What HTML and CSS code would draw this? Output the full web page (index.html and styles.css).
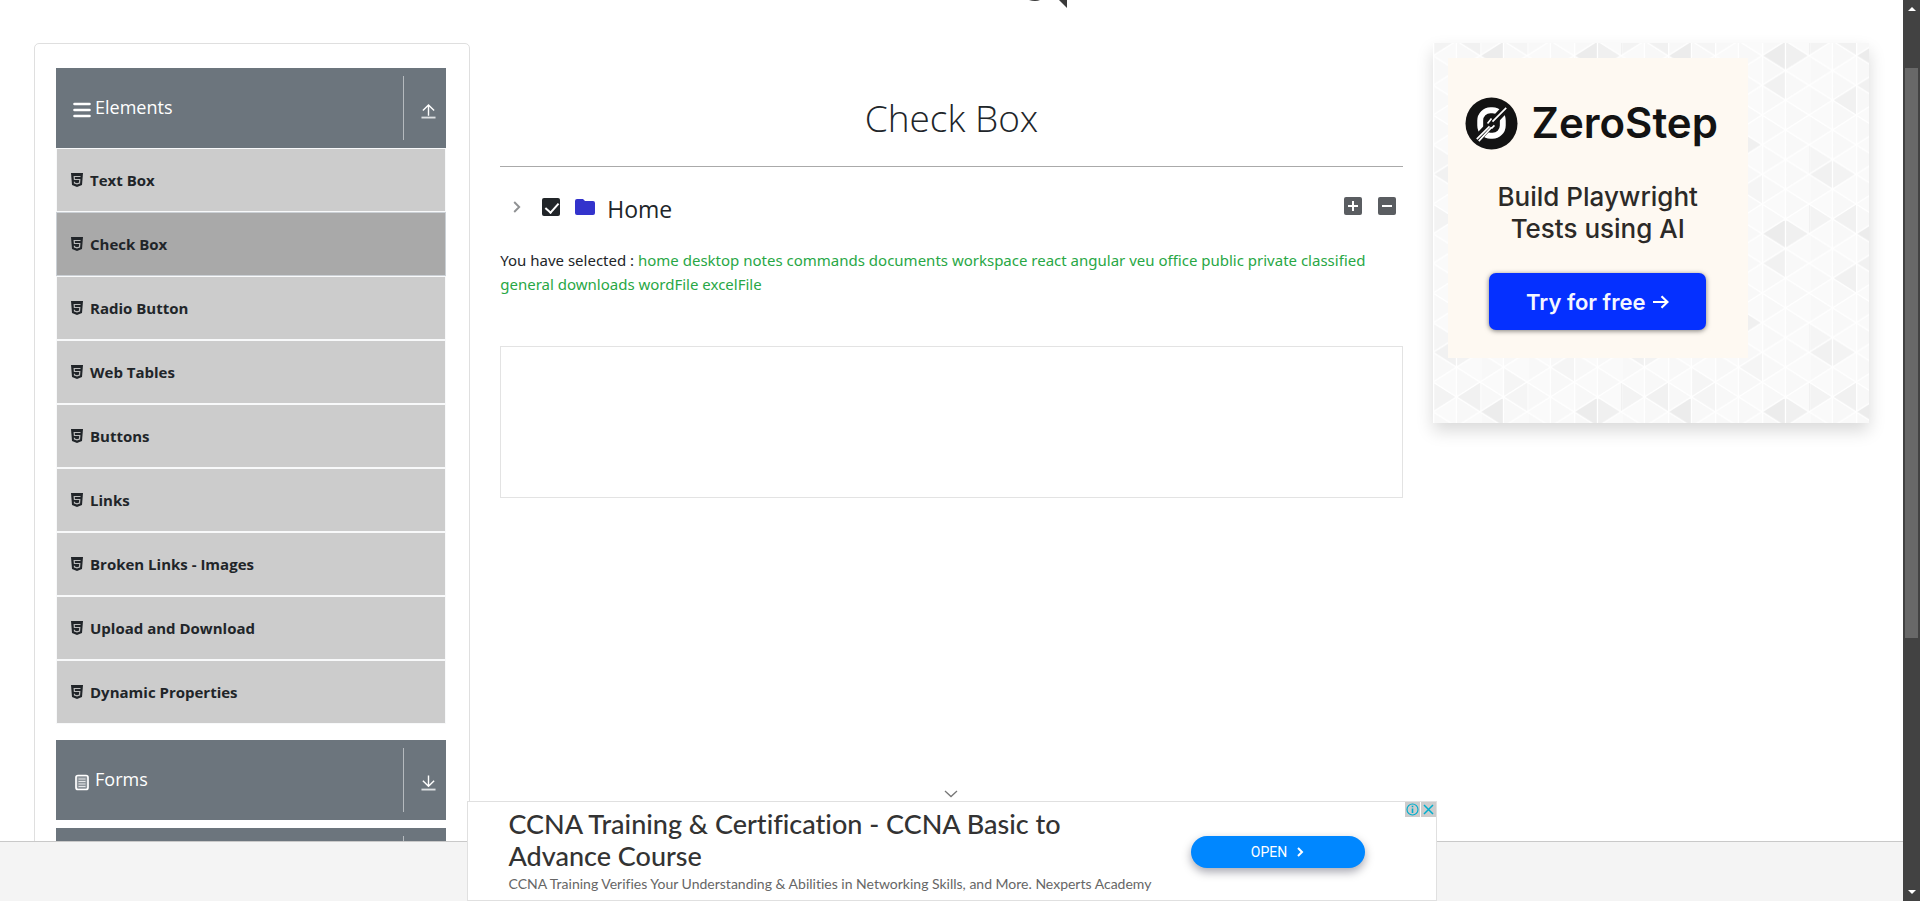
FILE: index.html
```html
<!DOCTYPE html>
<html lang="en">
<head>
<meta charset="utf-8">
<title>Check Box</title>
<link rel="stylesheet" href="styles.css">
</head>
<body>
<svg class="sprite" aria-hidden="true">
  <symbol id="html5" viewBox="0 0 12 14">
    <path fill="#212529" d="M0 0h12l-1 12-5 2-5-2z"/>
    <path fill="none" stroke="#bbb" stroke-width="1.200" d="M9.500 3.500H3.200l.2 3h5.400l-.3 3.500L6 10.900l-2.500-.9-.1-1.300"/>
  </symbol>
  <symbol id="up" viewBox="0 0 16 16">
    <path fill="none" stroke="#fff" stroke-width="1.500" d="M8 13V1.500M2 7.500l6-6 6 6"/>
    <path stroke="#dde0e3" stroke-width="2" d="M.5 15h15"/>
  </symbol>
  <symbol id="down" viewBox="0 0 16 16">
    <path fill="none" stroke="#fff" stroke-width="1.500" d="M8 0v11.500M2 5.500l6 6 6-6"/>
    <path stroke="#dde0e3" stroke-width="2" d="M.5 15h15"/>
  </symbol>
</svg>
<div class="window">
  <div class="page">
    <svg class="logo-edge" viewBox="0 0 40 9" aria-hidden="true"><path fill="#3a3a3a" d="M1 0h11q-2 1-5 1T1 0zM31 0h8v8z"/></svg>
    <div class="content">
      <div class="row">
        <nav class="sidebar">
          <section class="group">
            <button class="group-head" type="button">
              <svg class="group-icon" viewBox="0 0 18 18"><path stroke="#fff" stroke-width="2.600" stroke-linecap="round" d="M1.500 3h15M1.500 9h15M1.500 15h15"/></svg>
              <span class="group-title">Elements</span>
              <span class="group-toggle"><svg class="arrow"><use href="#up"/></svg></span>
            </button>
            <ul class="menu">
              <li><a class="item" href="#"><svg class="item-icon"><use href="#html5"/></svg>Text Box</a></li>
              <li><a class="item active" href="#"><svg class="item-icon"><use href="#html5"/></svg>Check Box</a></li>
              <li><a class="item" href="#"><svg class="item-icon"><use href="#html5"/></svg>Radio Button</a></li>
              <li><a class="item" href="#"><svg class="item-icon"><use href="#html5"/></svg>Web Tables</a></li>
              <li><a class="item" href="#"><svg class="item-icon"><use href="#html5"/></svg>Buttons</a></li>
              <li><a class="item" href="#"><svg class="item-icon"><use href="#html5"/></svg>Links</a></li>
              <li><a class="item" href="#"><svg class="item-icon"><use href="#html5"/></svg>Broken Links - Images</a></li>
              <li><a class="item" href="#"><svg class="item-icon"><use href="#html5"/></svg>Upload and Download</a></li>
              <li><a class="item" href="#"><svg class="item-icon"><use href="#html5"/></svg>Dynamic Properties</a></li>
            </ul>
          </section>
          <section class="group">
            <button class="group-head" type="button">
              <svg class="group-icon" viewBox="0 0 18 18"><rect x="3" y="2.500" width="12" height="14" rx="2" fill="#8e959b" stroke="#fff" stroke-width="1.700"/><path stroke="#e4e6e8" d="M5.500 6h7M5.500 8.500h7M5.500 11h7M5.500 13.500h7"/></svg>
              <span class="group-title">Forms</span>
              <span class="group-toggle"><svg class="arrow"><use href="#down"/></svg></span>
            </button>
          </section>
          <section class="group">
            <button class="group-head" type="button" aria-label="More">
              <span class="group-title"></span>
              <span class="group-toggle"></span>
            </button>
          </section>
        </nav>
        <main class="main">
          <h1 class="title">Check Box</h1>
          <div class="tree">
            <button class="tree-toggle" type="button" aria-label="Toggle"><svg viewBox="0 0 8 12"><path fill="none" stroke="#8f9193" stroke-width="1.900" d="M1.200 1l5 5-5 5"/></svg></button>
            <input class="tree-check" id="home" type="checkbox" checked>
            <label class="tree-label" for="home">
              <svg class="folder" viewBox="0 0 20 16"><path fill="#33c" d="M2 0h6l2 2h8a2 2 0 0 1 2 2v10a2 2 0 0 1-2 2H2a2 2 0 0 1-2-2V2a2 2 0 0 1 2-2z"/></svg>
              <span class="tree-text">Home</span>
            </label>
            <div class="tree-options">
              <button type="button" aria-label="Expand all"><svg viewBox="0 0 18 18"><rect width="18" height="18" rx="2" fill="#5a5d61"/><path stroke="#fff" stroke-width="2" d="M4 9h10M9 4v10"/></svg></button>
              <button type="button" aria-label="Collapse all"><svg viewBox="0 0 18 18"><rect width="18" height="18" rx="2" fill="#5a5d61"/><path stroke="#fff" stroke-width="2" d="M4 9h10"/></svg></button>
            </div>
          </div>
          <p class="result">You have selected : <span class="picked">home desktop notes commands documents workspace react angular veu office public private classified general downloads wordFile excelFile</span></p>
          <div class="frame"></div>
        </main>
        <aside class="side">
          <div class="promo">
            <svg class="promo-bg" aria-hidden="true">
              <defs>
                <pattern id="shade" width="188" height="178" patternUnits="userSpaceOnUse">
                  <path fill="#ececec" d="M164.500-2.100v29.600L141 12.700zM164.500-2.100v29.600l23.500-14.800zM70.500-2.100v29.600L47 12.700zM117.500 86.900v29.600l23.500-14.800z"/>
                  <path fill="#f1f1f1" d="M0 161.200v29.600L23.500 176zM47 161.200v29.600L23.500 176zM0-16.800v29.600L23.500-2zM47-16.800v29.600L23.500-2zM47 42.500v29.600L23.500 57.300zM23.500 116.500v29.600L0 131.400zM23.500 116.500v29.600L47 131.400zM70.500 27.600v29.600L47 42.400zM164.500 27.600v29.600L141 42.400z"/>
                  <path fill="#f5f5f5" d="M94 42.500v29.600l23.500-14.800zM70.500 57.300v29.600L94 72zM117.500 27.600v29.600L94 42.400zM0 101.900v29.600l23.500-14.800zM94 161.200v29.600L70.500 176zM94-16.800v29.600L70.500-2zM141 131.500v29.600l-23.500-14.800zM70.500 146.200v29.600L94 161z"/>
                </pattern>
                <pattern id="mesh" y="12.700" width="47" height="29.670" patternUnits="userSpaceOnUse">
                  <path fill="#f4f4f4" fill-opacity=".4" d="M0 0l23.500 14.800L0 29.700zM23.500 0v14.800L47 0zM23.500 29.700V14.800L47 29.700z"/>
                  <path fill="none" stroke="#fff" stroke-width="1.300" d="M0 0l47 29.670M47 0L0 29.670M.6 0v30M23.500 0v30"/>
                </pattern>
              </defs>
              <rect width="100%" height="100%" fill="#fafafa"/>
              <rect width="100%" height="100%" fill="url(#shade)"/>
              <rect width="100%" height="100%" fill="url(#mesh)"/>
            </svg>
            <div class="zero">
              <div class="zero-brand">
                <svg class="zero-logo" viewBox="0 0 54 54"><circle cx="27" cy="27" r="26.500" fill="#131313"/><rect x="15.500" y="13.500" width="23" height="26" rx="10.500" fill="none" stroke="#fff" stroke-width="6"/><path stroke="#131313" stroke-width="8" d="M11 44L43 10"/><path stroke="#fff" stroke-width="1.700" d="M12 43l13-13M28 25l14-14M14 45l13-14M30 29l-3 3M27 22l-4 5"/></svg>
                <span>ZeroStep</span>
              </div>
              <p class="zero-text">Build Playwright<br>Tests using AI</p>
              <button class="zero-cta" type="button">Try for free <svg viewBox="0 0 16 14"><path fill="none" stroke="#fff" stroke-width="2.200" d="M0 7h14M8.500 1.200l6 5.800-6 5.800"/></svg></button>
            </div>
          </div>
        </aside>
      </div>
    </div>
    <footer class="footer"></footer>
    <div class="banner">
      <button class="banner-collapse" type="button" aria-label="Collapse"><svg viewBox="0 0 14 8"><path fill="none" stroke="#777" stroke-width="1.300" d="M1 1l6 5.500L13 1"/></svg></button>
      <div class="banner-copy">
        <div class="banner-title">CCNA Training &amp; Certification - CCNA Basic to Advance Course</div>
        <div class="banner-sub">CCNA Training Verifies Your Understanding &amp; Abilities in Networking Skills, and More. Nexperts Academy</div>
      </div>
      <button class="banner-open" type="button">OPEN <svg viewBox="0 0 7 10"><path fill="none" stroke="#fff" stroke-width="2" d="M1 1l4 4-4 4"/></svg></button>
      <div class="banner-badges">
        <button type="button" aria-label="Ad information"><svg viewBox="0 0 15 15"><circle cx="7.500" cy="7.500" r="5.500" fill="none" stroke="#00aecd" stroke-width="1.200"/><path stroke="#00aecd" stroke-width="1.600" d="M7.500 6.500V11M7.500 3.800v1.500"/></svg></button>
        <button type="button" aria-label="Close ad"><svg viewBox="0 0 15 15"><path stroke="#00aecd" stroke-width="1.500" d="M3 3l9 9M12 3l-9 9"/></svg></button>
      </div>
    </div>
  </div>
  <div class="scrollbar" aria-hidden="true">
    <svg class="scroll-arrow" viewBox="0 0 8 4"><path fill="#fff" d="M0 4l4-4 4 4z"/></svg>
    <div class="scroll-track"><div class="scroll-thumb"></div></div>
    <svg class="scroll-arrow" viewBox="0 0 8 4"><path fill="#fff" d="M0 0l4 4 4-4z"/></svg>
  </div>
</div>
</body>
</html>
```
FILE: styles.css
```css
* { box-sizing: border-box; }

body {
  margin: 0;
  background: #fff;
  color: #212529;
  font: 15px/24px "Open Sans", "Noto Sans", sans-serif;
}

button {
  margin: 0;
  padding: 0;
  border: 0;
  background: none;
  color: inherit;
  font: inherit;
}

svg { display: block; flex: none; }

.sprite { position: absolute; width: 0; height: 0; }

.window { display: flex; height: 100vh; overflow: hidden; }

.page {
  position: relative;
  display: flex;
  flex: 1;
  flex-direction: column;
  min-width: 0;
}

.logo-edge { position: absolute; top: 0; left: 54%; width: 40px; height: 9px; }

.content { flex: 1; min-height: 0; overflow: hidden; padding: 43px 1% 0; }

.row { display: grid; grid-template-columns: 1fr 2fr 1fr; }

.sidebar {
  margin: 0 15px;
  padding: 24px 23px 24px 21px;
  border: 1px solid #dfdfdf;
  border-radius: 5px;
  height: 1000px;
}

.group { margin-bottom: 8px; }

.group-head {
  display: flex;
  align-items: center;
  width: 100%;
  height: 80px;
  padding: 8px 10px 8px 16px;
  background: #6c757d;
  color: #fff;
  font-size: 18px;
  text-align: left;
}

.group-icon { width: 20px; height: 18px; margin: 4px 3px 0 0; }

.group-title { flex: 1; padding-bottom: 2px; }

.group-toggle {
  display: flex;
  align-items: center;
  width: 33px;
  height: 64px;
  padding: 5px 0 0 17px;
  border-left: 1px solid #b5babe;
}

.arrow { width: 15px; height: 16px; }

.menu { margin: 0 0 16px; padding: 0; list-style: none; }

.item {
  display: flex;
  align-items: center;
  height: 64px;
  padding: 0 14px;
  border: 1px solid #f8f9fa;
  background: #ccc;
  color: #212529;
  font-weight: 700;
  text-decoration: none;
}

.item.active { border-color: #cbd0d5; background: #a9a9a9; }

.item-icon { width: 12px; height: 14px; margin-right: 7px; }

.main { margin: 0 15px; padding-top: 51px; }

.title {
  margin: 0;
  padding-bottom: 24px;
  border-bottom: 1px solid #aaa;
  font-size: 37px;
  font-weight: 300;
  line-height: 48px;
  text-align: center;
}

.tree {
  display: flex;
  align-items: center;
  height: 48px;
  margin: 16px 0 17px;
  padding: 0 7px 0 13px;
}

.tree-toggle svg { width: 8px; height: 12px; }

.tree-check {
  position: relative;
  width: 18px;
  height: 18px;
  margin: 0 15px 0 21px;
  border-radius: 2px;
  appearance: none;
}

.tree-check:checked { background: #212529; }

.tree-check:checked::after {
  content: "";
  position: absolute;
  top: 2px;
  left: 6px;
  width: 6px;
  height: 11px;
  border: solid #fff;
  border-width: 0 2px 2px 0;
  transform: rotate(42deg);
}

.tree-label { display: flex; align-items: center; gap: 12px; font-size: 23px; }

.tree-text { padding-top: 3px; }

.folder { width: 20px; height: 16px; }

.tree-options { display: flex; gap: 16px; margin-left: auto; padding-bottom: 2px; }

.tree-options svg { width: 18px; height: 18px; }

.result { margin: 0; font-family: "Noto Sans", sans-serif; }

.picked { color: #28a745; }

.frame { height: 152px; margin-top: 50px; border: 1px solid #e3e3e3; }

.side { margin: 0 15px; }

.promo {
  position: relative;
  height: 380px;
  padding: 15px;
  box-shadow: 0 8px 16px rgba(0, 0, 0, .15);
}

.promo-bg { position: absolute; inset: 0; width: 100%; height: 100%; }

.zero {
  position: relative;
  display: flex;
  flex-direction: column;
  align-items: center;
  width: 300px;
  height: 300px;
  padding-top: 37px;
  background: #fef9f2;
  font-family: Inter, sans-serif;
}

.zero-brand {
  display: flex;
  align-items: center;
  gap: 14px;
  margin-right: 13px;
  color: #131313;
  font-size: 42px;
  font-weight: 600;
  line-height: 56px;
}

.zero-logo { width: 53px; height: 53px; }

.zero-text {
  margin: 30px 0 28px;
  color: #2c2a28;
  font-size: 26px;
  font-weight: 500;
  line-height: 32px;
  text-align: center;
}

.zero-cta {
  display: flex;
  align-items: center;
  justify-content: center;
  gap: 8px;
  width: 217px;
  height: 57px;
  border-radius: 7px;
  background: #0530ff;
  box-shadow: 0 1px 5px rgba(0, 0, 0, .5);
  color: #f4f6ff;
  font-size: 22px;
  font-weight: 600;
}

.zero-cta svg { width: 16px; height: 14px; }

.footer { height: 60px; border-top: 1px solid #c9c9c9; background: #f4f4f4; }

.banner {
  position: absolute;
  bottom: 0;
  left: 50%;
  display: flex;
  align-items: center;
  width: 970px;
  height: 100px;
  padding: 2px 71px 0 41px;
  transform: translateX(-50%);
  border: 1px solid #e0e0e0;
  background: #fff;
  font-variant-ligatures: none;
}

.banner-collapse { position: absolute; top: -12px; left: 476px; }

.banner-collapse svg { width: 14px; height: 8px; }

.banner-copy { flex: 1; }

.banner-title {
  max-width: 600px;
  color: #333;
  font-family: Lato, sans-serif;
  font-size: 27px;
  font-weight: 500;
  line-height: 32px;
}

.banner-sub {
  color: #666;
  font-family: Lato, sans-serif;
  font-size: 14px;
}

.banner-open {
  display: flex;
  align-items: center;
  justify-content: center;
  gap: 10px;
  width: 174px;
  height: 32px;
  border-radius: 16px;
  background: #0087ff;
  box-shadow: 0 4px 10px rgba(0, 0, 30, .35);
  color: #fff;
  font-family: Roboto, sans-serif;
  font-size: 14px;
}

.banner-open svg { width: 7px; height: 10px; }

.banner-badges { position: absolute; top: 0; right: 0; display: flex; gap: 1px; }

.banner-badges button { background: #ccc; }

.banner-badges svg { width: 15px; height: 15px; }

.scrollbar {
  display: flex;
  flex-direction: column;
  align-items: center;
  width: 17px;
  padding: 7px 0;
  background: #424242;
}

.scroll-arrow { width: 8px; height: 4px; }

.scroll-track { flex: 1; padding-top: 57px; }

.scroll-thumb { width: 13px; height: 570px; background: #686868; }
```
